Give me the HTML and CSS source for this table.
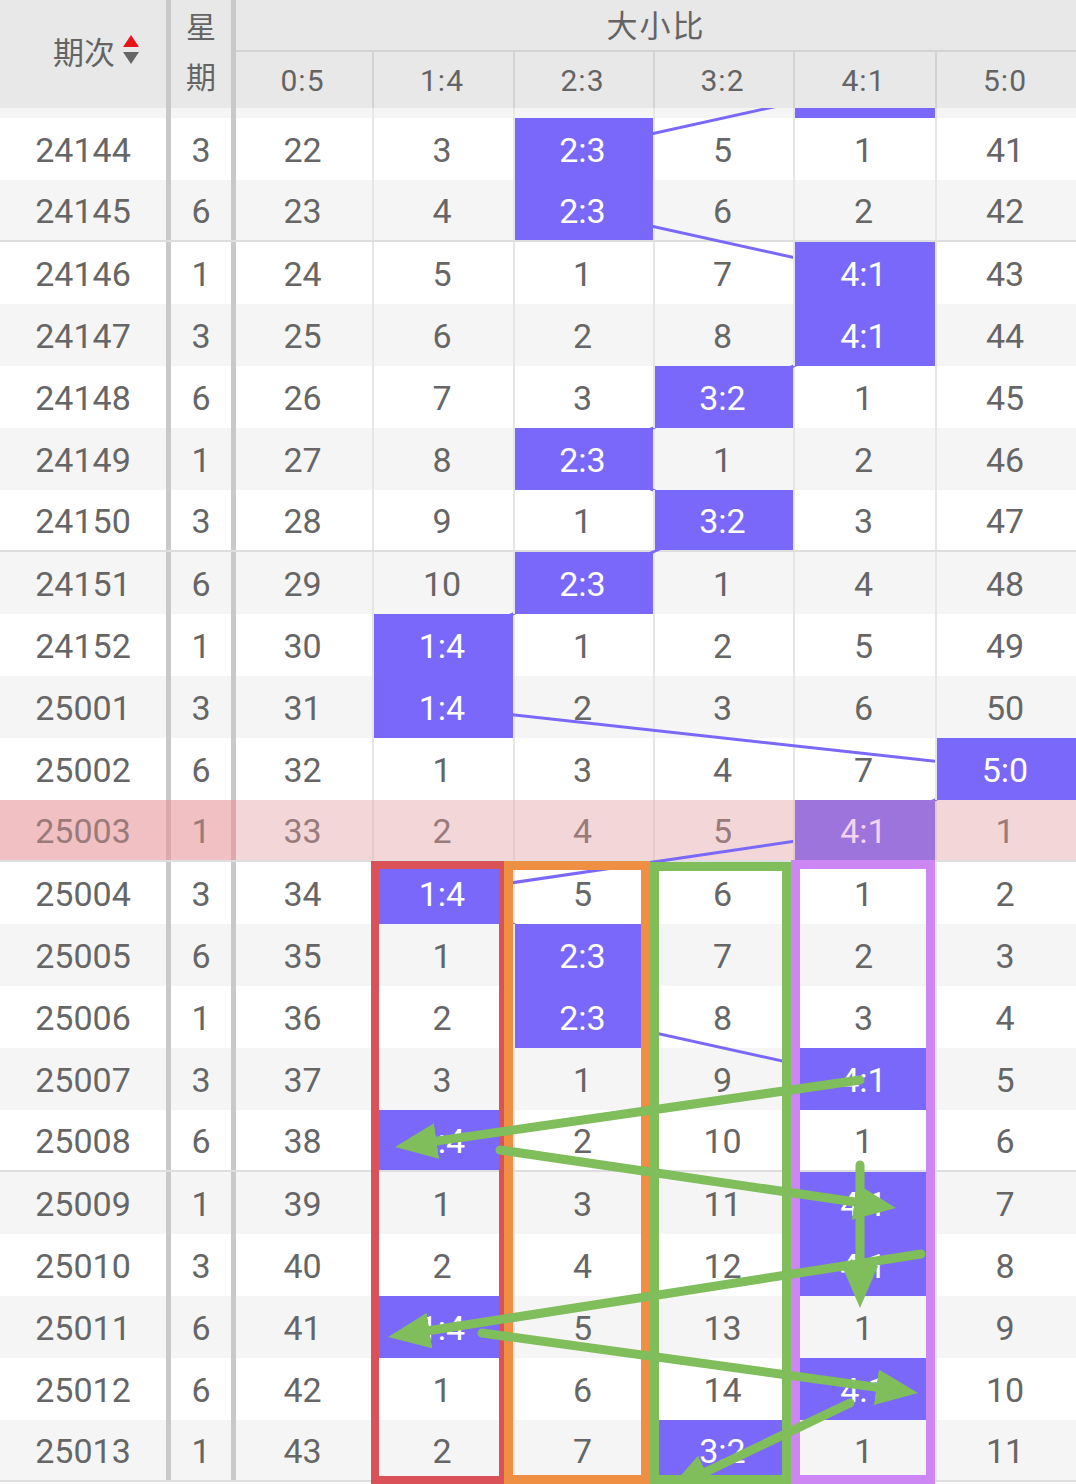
FILE: index.html
```html
<!DOCTYPE html>
<html lang="zh">
<head>
<meta charset="utf-8">
<title>大小比走势</title>
<link rel="stylesheet" href="styles.css">
</head>
<body>
<div class="table">
  <div class="thead">
    <div class="h-qc"><span>期次</span>
      <svg class="sort" viewBox="0 0 16 32" width="16" height="32"><path d="M8 1 L16 13 L0 13 Z" fill="#e8141c"/><path d="M0 18 L16 18 L8 30 Z" fill="#666"/></svg>
    </div>
    <div class="sep sep-a"></div>
    <div class="h-xq"><span>星</span><span>期</span></div>
    <div class="sep sep-b"></div>
    <div class="h-group">大小比</div>
    <div class="h-col">0:5</div>
    <div class="h-col">1:4</div>
    <div class="h-col">2:3</div>
    <div class="h-col">3:2</div>
    <div class="h-col">4:1</div>
    <div class="h-col">5:0</div>
  </div>

  <div class="tbody">
    <svg class="links" width="1076" height="1376" viewBox="0 0 1076 1376">
      <polyline fill="none" stroke="#7a68fa" stroke-width="3" stroke-linejoin="round"
        points="864,-21 583,41 583,103 864,165 864,227 723,289 583,351 723,413 583,475 442.5,537 442.5,599 1005.5,661 864,723 442.5,785 583,847 583,909 864,971 442.5,1033 864,1095 864,1157 442.5,1219 864,1281 723,1343"/>
    </svg>

    <div class="row alt first"><div class="c id"></div><div class="sep"></div><div class="c wk"></div><div class="sep"></div><div class="c d"></div><div class="c d"></div><div class="c d"></div><div class="c d"></div><div class="c d hl"></div><div class="c d"></div></div>
    <div class="row"><div class="c id">24144</div><div class="sep"></div><div class="c wk">3</div><div class="sep"></div><div class="c d">22</div><div class="c d">3</div><div class="c d hl">2:3</div><div class="c d">5</div><div class="c d">1</div><div class="c d">41</div></div>
    <div class="row alt cut"><div class="c id">24145</div><div class="sep"></div><div class="c wk">6</div><div class="sep"></div><div class="c d">23</div><div class="c d">4</div><div class="c d hl">2:3</div><div class="c d">6</div><div class="c d">2</div><div class="c d">42</div></div>
    <div class="row"><div class="c id">24146</div><div class="sep"></div><div class="c wk">1</div><div class="sep"></div><div class="c d">24</div><div class="c d">5</div><div class="c d">1</div><div class="c d">7</div><div class="c d hl">4:1</div><div class="c d">43</div></div>
    <div class="row alt"><div class="c id">24147</div><div class="sep"></div><div class="c wk">3</div><div class="sep"></div><div class="c d">25</div><div class="c d">6</div><div class="c d">2</div><div class="c d">8</div><div class="c d hl">4:1</div><div class="c d">44</div></div>
    <div class="row"><div class="c id">24148</div><div class="sep"></div><div class="c wk">6</div><div class="sep"></div><div class="c d">26</div><div class="c d">7</div><div class="c d">3</div><div class="c d hl">3:2</div><div class="c d">1</div><div class="c d">45</div></div>
    <div class="row alt"><div class="c id">24149</div><div class="sep"></div><div class="c wk">1</div><div class="sep"></div><div class="c d">27</div><div class="c d">8</div><div class="c d hl">2:3</div><div class="c d">1</div><div class="c d">2</div><div class="c d">46</div></div>
    <div class="row cut"><div class="c id">24150</div><div class="sep"></div><div class="c wk">3</div><div class="sep"></div><div class="c d">28</div><div class="c d">9</div><div class="c d">1</div><div class="c d hl">3:2</div><div class="c d">3</div><div class="c d">47</div></div>
    <div class="row alt"><div class="c id">24151</div><div class="sep"></div><div class="c wk">6</div><div class="sep"></div><div class="c d">29</div><div class="c d">10</div><div class="c d hl">2:3</div><div class="c d">1</div><div class="c d">4</div><div class="c d">48</div></div>
    <div class="row"><div class="c id">24152</div><div class="sep"></div><div class="c wk">1</div><div class="sep"></div><div class="c d">30</div><div class="c d hl">1:4</div><div class="c d">1</div><div class="c d">2</div><div class="c d">5</div><div class="c d">49</div></div>
    <div class="row alt"><div class="c id">25001</div><div class="sep"></div><div class="c wk">3</div><div class="sep"></div><div class="c d">31</div><div class="c d hl">1:4</div><div class="c d">2</div><div class="c d">3</div><div class="c d">6</div><div class="c d">50</div></div>
    <div class="row"><div class="c id">25002</div><div class="sep"></div><div class="c wk">6</div><div class="sep"></div><div class="c d">32</div><div class="c d">1</div><div class="c d">3</div><div class="c d">4</div><div class="c d">7</div><div class="c d hl">5:0</div></div>
    <div class="row cur cut"><div class="c id">25003</div><div class="sep"></div><div class="c wk">1</div><div class="sep"></div><div class="c d">33</div><div class="c d">2</div><div class="c d">4</div><div class="c d">5</div><div class="c d hl">4:1</div><div class="c d">1</div></div>
    <div class="row"><div class="c id">25004</div><div class="sep"></div><div class="c wk">3</div><div class="sep"></div><div class="c d">34</div><div class="c d hl">1:4</div><div class="c d">5</div><div class="c d">6</div><div class="c d">1</div><div class="c d">2</div></div>
    <div class="row alt"><div class="c id">25005</div><div class="sep"></div><div class="c wk">6</div><div class="sep"></div><div class="c d">35</div><div class="c d">1</div><div class="c d hl">2:3</div><div class="c d">7</div><div class="c d">2</div><div class="c d">3</div></div>
    <div class="row"><div class="c id">25006</div><div class="sep"></div><div class="c wk">1</div><div class="sep"></div><div class="c d">36</div><div class="c d">2</div><div class="c d hl">2:3</div><div class="c d">8</div><div class="c d">3</div><div class="c d">4</div></div>
    <div class="row alt"><div class="c id">25007</div><div class="sep"></div><div class="c wk">3</div><div class="sep"></div><div class="c d">37</div><div class="c d">3</div><div class="c d">1</div><div class="c d">9</div><div class="c d hl">4:1</div><div class="c d">5</div></div>
    <div class="row cut"><div class="c id">25008</div><div class="sep"></div><div class="c wk">6</div><div class="sep"></div><div class="c d">38</div><div class="c d hl">1:4</div><div class="c d">2</div><div class="c d">10</div><div class="c d">1</div><div class="c d">6</div></div>
    <div class="row alt"><div class="c id">25009</div><div class="sep"></div><div class="c wk">1</div><div class="sep"></div><div class="c d">39</div><div class="c d">1</div><div class="c d">3</div><div class="c d">11</div><div class="c d hl">4:1</div><div class="c d">7</div></div>
    <div class="row"><div class="c id">25010</div><div class="sep"></div><div class="c wk">3</div><div class="sep"></div><div class="c d">40</div><div class="c d">2</div><div class="c d">4</div><div class="c d">12</div><div class="c d hl">4:1</div><div class="c d">8</div></div>
    <div class="row alt"><div class="c id">25011</div><div class="sep"></div><div class="c wk">6</div><div class="sep"></div><div class="c d">41</div><div class="c d hl">1:4</div><div class="c d">5</div><div class="c d">13</div><div class="c d">1</div><div class="c d">9</div></div>
    <div class="row"><div class="c id">25012</div><div class="sep"></div><div class="c wk">6</div><div class="sep"></div><div class="c d">42</div><div class="c d">1</div><div class="c d">6</div><div class="c d">14</div><div class="c d hl">4:1</div><div class="c d">10</div></div>
    <div class="row alt cut"><div class="c id">25013</div><div class="sep"></div><div class="c wk">1</div><div class="sep"></div><div class="c d">43</div><div class="c d">2</div><div class="c d">7</div><div class="c d hl">3:2</div><div class="c d">1</div><div class="c d">11</div></div>

    <svg class="marks" width="1076" height="1376" viewBox="0 0 1076 1376">
      <defs>
        <marker id="head" viewBox="0 0 42 36" refX="6" refY="18" markerWidth="42" markerHeight="36" markerUnits="userSpaceOnUse" orient="auto">
          <path d="M0 0 L42 18 L0 36 Z" fill="#80bd5b"/>
        </marker>
      </defs>
      <g fill="none" stroke-width="8">
        <rect x="375" y="757" width="128" height="615" stroke="#da5157"/>
      </g>
      <g fill="none" stroke-width="9">
        <rect x="508.5" y="757.5" width="137" height="614" stroke="#ee8f44"/>
        <rect x="654.5" y="758.5" width="132" height="613" stroke="#80bd5b"/>
        <rect x="795.5" y="756.5" width="135" height="615" stroke="#cc87f4"/>
      </g>
      <g stroke="#80bd5b" stroke-width="9" stroke-linecap="round" marker-end="url(#head)">
        <line x1="860" y1="972" x2="430.6" y2="1033.9"/>
        <line x1="500" y1="1042" x2="860.4" y2="1094.8"/>
        <line x1="860" y1="1057" x2="860" y2="1164"/>
        <line x1="921" y1="1146" x2="423.6" y2="1223.5"/>
        <line x1="482" y1="1225" x2="882.3" y2="1280.1"/>
        <line x1="850" y1="1295" x2="700.5" y2="1366.5"/>
      </g>
    </svg>
  </div>
</div>
</body>
</html>
```

FILE: styles.css
```css
* { box-sizing: border-box; }

html, body {
  margin: 0;
  padding: 0;
  background: #ffffff;
}

body {
  font-family: Roboto, "Noto Sans CJK SC", sans-serif;
  color: #666666;
}

.table {
  width: 1076px;
  position: relative;
}

/* ---------- header ---------- */
.thead {
  display: grid;
  grid-template-columns: 166px 5px 60px 5px 136px 141px 140px 140px 142px 141px;
  grid-template-rows: 52px 56px;
  background: #e8e8e8;
  color: #646464;
}

.h-qc {
  grid-row: 1 / 3;
  grid-column: 1;
  display: flex;
  align-items: center;
  justify-content: center;
  padding-left: 26px;
  padding-bottom: 8px;
  gap: 8px;
  font-size: 31px;
}

.sort { display: block; }

.sep {
  background: #c9c9c9;
}

.thead .sep-a { grid-row: 1 / 3; grid-column: 2; }
.thead .sep-b { grid-row: 1 / 3; grid-column: 4; }

.h-xq {
  grid-row: 1 / 3;
  grid-column: 3;
  display: flex;
  flex-direction: column;
  align-items: center;
  justify-content: center;
  font-size: 30px;
  line-height: 50px;
  padding-bottom: 2px;
}

.h-group {
  grid-row: 1;
  grid-column: 5 / 11;
  display: flex;
  align-items: center;
  justify-content: center;
  font-size: 31px;
  letter-spacing: 2px;
  border-bottom: 2px solid #d3d3d3;
  padding-bottom: 4px;
}

.h-col {
  grid-row: 2;
  display: flex;
  align-items: center;
  justify-content: center;
  font-size: 30px;
  letter-spacing: 1px;
  padding-right: 3px;
}

.h-col + .h-col {
  border-left: 2px solid #d3d3d3;
}

/* ---------- body ---------- */
.tbody {
  position: relative;
  height: 1376px;
  overflow: hidden;
}

.row {
  display: grid;
  grid-template-columns: 166px 5px 60px 5px 136px 141px 140px 140px 142px 141px;
  height: 62px;
  background: #ffffff;
  font-size: 34px;
}

.row.first { margin-top: -52px; }

.row.alt { background: #f5f5f5; }

.row.cut { border-bottom: 2px solid #dedede; }

.c {
  display: flex;
  align-items: center;
  justify-content: center;
  color: #666666;
  padding-top: 2px;
}

.c.d { padding-right: 3px; }

.c.d + .c.d {
  border-left: 2px solid #e6e6e6;
}

.c.hl {
  position: relative;
  z-index: 2;
  background: #7a68fa;
  color: #ffffff;
}

/* current (pink) row */
.row.cur { background: #f2d6d8; }
.row.cur .c { color: #9a7a7b; }
.row.cur .c.id,
.row.cur .c.wk { background: #f0c0c2; }
.row.cur .sep { background: #dba9ac; }
.row.cur .c.d + .c.d { border-left-color: #e8c9cb; }
.row.cur .c.hl {
  background: #9c74dc;
  color: #f3d3ef;
}

.links {
  position: absolute;
  top: 0;
  left: 0;
  z-index: 1;
  pointer-events: none;
}

.marks {
  position: absolute;
  top: 0;
  left: 0;
  z-index: 3;
  pointer-events: none;
}
```
